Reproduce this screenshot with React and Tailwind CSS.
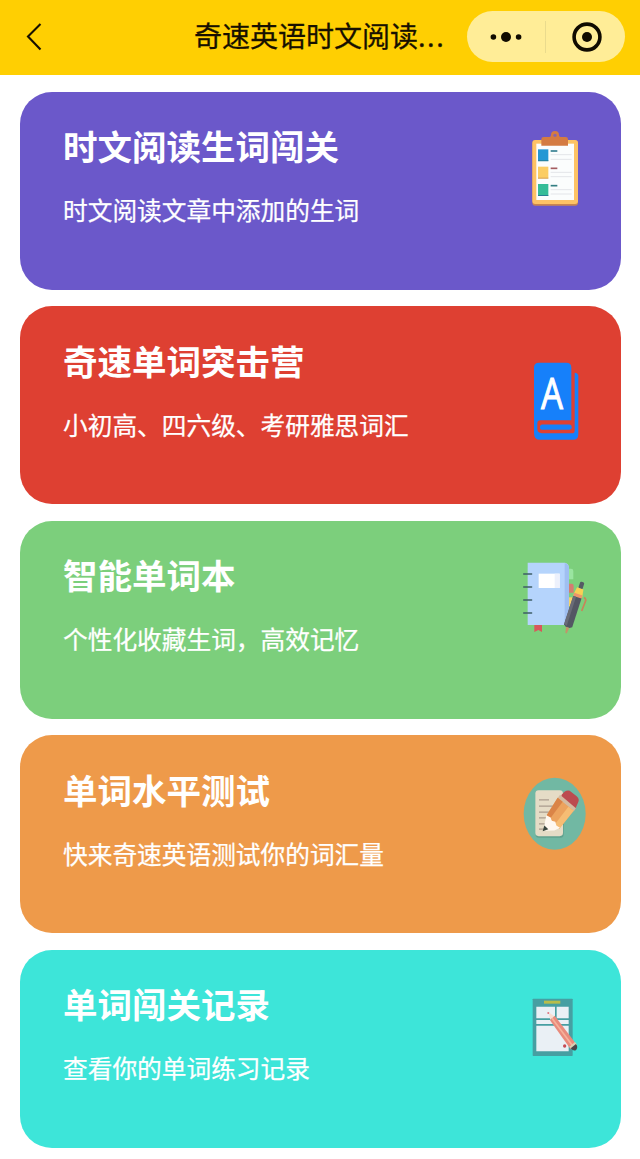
const ICON = 'h-[100px] w-20 shrink-0 overflow-visible';

function ClipboardIcon() {
  return (
    <svg viewBox="0 3 240 300" className={ICON}>
      <rect x="52" y="61" width="137" height="196" rx="9" fill="#c9854f" />
      <rect x="52" y="60" width="137" height="192" rx="9" fill="#fdc265" />
      <rect x="64" y="71" width="113" height="169" fill="#fbfdfd" />
      <path d="M79 77V58q0-7 7-7h17q5 0 5-6a12 12 0 0 1 24 0q0 6 5 6h15q7 0 7 7v19z" fill="#d47b42" />
      <circle cx="120" cy="46" r="5" fill="#8565ae" />
      <path d="M69 88h31v35H69z" fill="#2397d4" />
      <path d="M69 140h31v35H69z" fill="#fbcd63" />
      <path d="M69 192h31v35H69z" fill="#35bd98" />
      <path d="M69 121h31v3H69zM69 225h31v3H69z" fill="#287f94" />
      <path d="M69 173h31v3H69z" fill="#d6a153" />
      <path d="M107 93h20" stroke="#347f91" strokeWidth="5" />
      <path d="M107 145h20" stroke="#a45d60" strokeWidth="5" />
      <path d="M107 197h20" stroke="#347e83" strokeWidth="5" />
      <path d="M107 104h63M107 118h63M107 157h63M107 170h63M107 209h63M107 222h63" stroke="#e3e5e9" strokeWidth="3" />
    </svg>
  );
}

function DictionaryIcon() {
  return (
    <svg viewBox="0 -43.5 240 300" className={ICON}>
      <path d="M72 37h82q15 0 15 15v157H76q-9 0-9 9v17q0 13 13 13h94q5 0 5-7V67q9 0 11 9v175q0 17-16 17H75q-18 0-18-20V52q0-15 15-15z" fill="#1680fa" />
      <path d="M82 222h82q6 0 6 8t-6 8H82q-7 0-7-8t7-8z" fill="#1680fa" />
      <text x="111" y="175" textAnchor="middle" textLength="66" lengthAdjust="spacingAndGlyphs" stroke="#fff" strokeWidth="3" className="fill-white font-['Open_Sans',sans-serif] text-[130px]">A</text>
    </svg>
  );
}

function NotebookIcon() {
  return (
    <svg viewBox="0 0 240 300" className={ICON}>
      <path d="M157 56h11q7 0 7 7v25h-18z" fill="#9ae5a0" />
      <path d="M157 101h13q6 0 6 7v20h-19z" fill="#d67c70" />
      <path d="M157 142h17v27h-17z" fill="#f5d36b" />
      <path d="M58 220h23v26l-11-6-12 6z" fill="#d9575c" />
      <path d="M38 38h112q12 3 12 16v157q0 14-13 14H38z" fill="#b5d4fc" />
      <path d="M149 39q13 3 13 15v157q0 13-13 14z" fill="#9fbff1" />
      <path d="M71 71h63v43H71z" fill="#fff" />
      <path d="M119 71h15v43h-15z" fill="#edf1fc" />
      <path d="M26 72h24M26 111h24M26 150h24M26 189h24" stroke="#3e5e66" strokeWidth="4" strokeLinecap="round" />
      <path d="M207 142q8 5 4 13l-11 28" fill="none" stroke="#c9845a" strokeWidth="5" />
      <g transform="translate(201 99) rotate(18)">
        <rect x="-6" y="-3" width="13" height="21" rx="4" fill="#555b64" />
        <path d="M-10 17H10l4 24h-28z" fill="#f8cf55" />
        <path d="M-13 35h26v11h-26z" fill="#ed956b" />
        <path d="M-13 45h26v90l-7 5H-6l-7-6z" fill="#535763" />
        <path d="M-13 45h9v91l-9-3z" fill="#696c77" />
        <path d="M-5 140H5l-2 18h-4z" fill="#c49369" />
      </g>
    </svg>
  );
}

function PencilTestIcon() {
  return (
    <svg viewBox="0 -1.5 240 300" className={ICON}>
      <ellipse cx="119" cy="145" rx="93" ry="108" fill="#71b8a3" />
      <rect x="62" y="78" width="84" height="139" rx="10" fill="#52897a" opacity=".5" />
      <rect x="61" y="74" width="83" height="138" rx="10" fill="#e5dcc6" />
      <path d="M72 103h30M72 122h46M72 140h35M72 157h22M72 175h18M72 191h20" stroke="#aa9c8e" strokeWidth="4" />
      <path d="M140 88q12-16 24-12l21 16q10 8 4 20l-10 22-42-34z" fill="#bc4b4f" />
      <path d="m135 88 48 40-7 10-49-39z" fill="#d4bba1" />
      <path d="m128 97 48 39-43 54-38-41z" fill="#eca35e" />
      <path d="m128 97 15 12-38 51-10-11z" fill="#da8447" />
      <path d="m160 124 16 12-43 54-13-14z" fill="#f6bd74" />
      <path d="m94 149 13 7 3 10 11 3 3 11 11 7-17 8-30 1 1-22z" fill="#fff8ef" />
      <path d="m88 180 12 11-17 6z" fill="#3a463e" />
    </svg>
  );
}

function RecordIcon() {
  return (
    <svg viewBox="0 -3 240 300" className={ICON}>
      <rect x="53" y="56" width="120" height="172" rx="2" fill="#469fa2" />
      <path d="M87 62h49v9H87z" fill="#b7bd4b" />
      <path d="M64 80h56v35H64zM125 80h36v35h-36zM64 120h97v12H64zM64 137h97v77H64z" fill="#eaf0f5" />
      <circle cx="100" cy="99" r="3" fill="#db6675" />
      <circle cx="149" cy="198" r="5" fill="#c64c54" />
      <path d="m101 97 17 12-12 11z" fill="#f6ddd1" />
      <path d="m105 121 14-14 65 86-17 15z" fill="#e98b7c" />
      <path d="m111 115 60 80" stroke="#f6b29b" strokeWidth="5" />
      <path d="m163 200 17-14 6 8-16 14z" fill="#d7d0b2" />
      <path d="m167 205 16-13q7 9 1 17-7 7-17-4z" fill="#49464a" />
    </svg>
  );
}

const cards = [
  { title: '时文阅读生词闯关', text: '时文阅读文章中添加的生词', color: 'bg-[#6b58ca]', Icon: ClipboardIcon },
  { title: '奇速单词突击营', text: '小初高、四六级、考研雅思词汇', color: 'bg-[#de4032]', Icon: DictionaryIcon },
  { title: '智能单词本', text: '个性化收藏生词，高效记忆', color: 'bg-[#7ccf7c]', Icon: NotebookIcon },
  { title: '单词水平测试', text: '快来奇速英语测试你的词汇量', color: 'bg-[#ee9a4a]', Icon: PencilTestIcon },
  { title: '单词闯关记录', text: '查看你的单词练习记录', color: 'bg-[#3de5d9]', Icon: RecordIcon },
];

function Header() {
  return (
    <header className="flex h-[75px] items-center bg-[#ffcf02] text-[#171000]">
      <button aria-label="返回" className="-mt-0.5 flex w-[194px] shrink-0 pl-[25px]">
        <svg viewBox="0 0 18 28" className="h-7 w-[18px]" fill="none" stroke="currentColor" strokeWidth="2.1">
          <path d="M15.5 1 3 13.5 15.5 26.5" />
        </svg>
      </button>
      <h1 className="-mt-1 w-[273px] shrink-0 whitespace-nowrap text-[28px] leading-10 [-webkit-text-stroke:0.3px]">奇速英语时文阅读<span className="font-['Noto_Sans'] tracking-[1.6px]">...</span></h1>
      <div className="mt-[-2px] flex h-[51px] w-[158px] items-center rounded-full bg-[#ffed97]">
        <button aria-label="更多" className="flex h-8 w-[79px] items-center justify-center border-r border-[#eadb8d]">
          <svg viewBox="0 0 32 12" className="h-3 w-8" fill="#100b00">
            <circle cx="3.4" cy="6" r="2.8" /><circle cx="16" cy="6" r="5" /><circle cx="28.6" cy="6" r="2.8" />
          </svg>
        </button>
        <button aria-label="关闭" className="flex flex-1 justify-center pl-[3px]">
          <svg viewBox="0 0 30 30" className="size-[30px]">
            <circle cx="15" cy="15" r="12.9" fill="none" stroke="#100b00" strokeWidth="3.6" /><circle cx="15" cy="15" r="5" fill="#100b00" />
          </svg>
        </button>
      </div>
    </header>
  );
}

export default function App() {
  return (
    <div className="h-[1159px] w-[640px] overflow-hidden bg-white font-['Noto_Sans_CJK_SC',sans-serif]">
      <Header />
      <main className="flex flex-col gap-[16.5px] pl-5 pr-[19px] pt-[16.5px]">
        {cards.map(({ title, text, color, Icon }) => (
          <section key={title} className={`flex h-[198px] justify-between rounded-[32px] pl-[43px] pr-[26px] pt-[29.5px] text-white ${color}`}>
            <div className="-mt-px whitespace-nowrap">
              <h2 className="text-[34.5px] font-bold leading-[50px]">{title}</h2>
              <p className="mt-[21px] text-[24.7px] leading-9 [-webkit-text-stroke:0.25px]">{text}</p>
            </div>
            <Icon />
          </section>
        ))}
      </main>
    </div>
  );
}
